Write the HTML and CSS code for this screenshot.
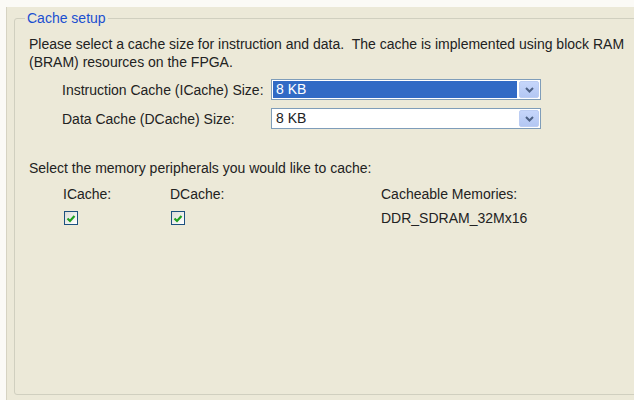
FILE: index.html
```html
<!DOCTYPE html>
<html lang="en">
<head>
<meta charset="utf-8">
<title>Cache setup</title>
<link rel="stylesheet" href="styles.css">
</head>
<body>
<div class="panel">
  <fieldset class="group">
    <legend class="group-title">Cache setup</legend>

    <p class="intro">Please select a cache size for instruction and data.&nbsp; The cache is implemented using block RAM<br>(BRAM) resources on the FPGA.</p>

    <div class="sizes">
      <label class="size-label" for="icache">Instruction Cache (ICache) Size:</label>
      <div class="combo" id="icache">
        <span class="combo-value selected">8 KB</span>
        <span class="combo-btn">
          <svg width="9" height="6" viewBox="0 0 9 6"><path d="M1 1 L4.5 4.5 L8 1" fill="none" stroke="#4d6185" stroke-width="2"/></svg>
        </span>
      </div>

      <label class="size-label" for="dcache">Data Cache (DCache) Size:</label>
      <div class="combo" id="dcache">
        <span class="combo-value">8 KB</span>
        <span class="combo-btn">
          <svg width="9" height="6" viewBox="0 0 9 6"><path d="M1 1 L4.5 4.5 L8 1" fill="none" stroke="#4d6185" stroke-width="2"/></svg>
        </span>
      </div>
    </div>

    <p class="periph">Select the memory peripherals you would like to cache:</p>

    <div class="mem-grid">
      <span class="col-head">ICache:</span>
      <span class="col-head">DCache:</span>
      <span class="col-head">Cacheable Memories:</span>

      <span class="check"><svg width="10" height="9" viewBox="0 0 10 9"><path d="M1.5 4.5 L4 7 L8.5 2" fill="none" stroke="#21a121" stroke-width="2.2"/></svg></span>
      <span class="check"><svg width="10" height="9" viewBox="0 0 10 9"><path d="M1.5 4.5 L4 7 L8.5 2" fill="none" stroke="#21a121" stroke-width="2.2"/></svg></span>
      <span class="mem-name">DDR_SDRAM_32Mx16</span>
    </div>
  </fieldset>
</div>
</body>
</html>
```
FILE: styles.css
```css
html, body {
  margin: 0;
  padding: 0;
  background: #fbfaf6;
  height: 100%;
  overflow: hidden;
}

body {
  font-family: "Liberation Sans", Arial, sans-serif;
  font-size: 14px;
  color: #222;
}

.panel {
  margin: 7px 0 0 6px;
  height: 393px;
  background: #ece9d8;
  border-left: 1px solid #d6d3c2;
  padding: 3px 0 0 7px;
  box-sizing: border-box;
}

.group {
  margin: 0 -12px 0 0;
  padding: 0 0 0 14px;
  height: 385px;
  box-sizing: border-box;
  border: 1px solid #d0cfbf;
  border-radius: 3px;
}

.group-title {
  color: #1a4fd0;
  padding: 0 2px;
  margin-left: -4px;
  line-height: 16px;
}

.intro {
  margin: 9px 0 0;
  line-height: 18px;
  white-space: nowrap;
}

.sizes {
  display: grid;
  grid-template-columns: 209px 270px;
  row-gap: 8px;
  margin: 8px 0 0 33px;
  align-items: center;
}

.combo {
  border: 1px solid #7f9db9;
  background: #fff;
  display: flex;
  align-items: stretch;
  padding: 1px;
  box-sizing: border-box;
  height: 21px;
}

.combo-value {
  flex: 1;
  padding-left: 3px;
  line-height: 17px;
}

.combo-value.selected {
  background: #316ac5;
  color: #fff;
}

.combo-btn {
  width: 18px;
  margin-left: 2px;
  background: linear-gradient(#c6d6fb, #b3c7f3);
  border: 1px solid #bccdf3;
  border-radius: 2px;
  display: flex;
  align-items: center;
  justify-content: center;
}

.periph {
  margin: 30px 0 0;
  line-height: 18px;
}

.mem-grid {
  display: grid;
  grid-template-columns: 107px 211px auto;
  grid-template-rows: 18px 18px;
  row-gap: 6px;
  margin: 8px 0 0 34px;
  align-items: center;
}

.check {
  width: 14px;
  height: 14px;
  box-sizing: border-box;
  margin-left: 1px;
  border: 1px solid #1c5180;
  background: linear-gradient(135deg, #dcdcd7, #fff);
  display: flex;
  align-items: center;
  justify-content: center;
}
```
